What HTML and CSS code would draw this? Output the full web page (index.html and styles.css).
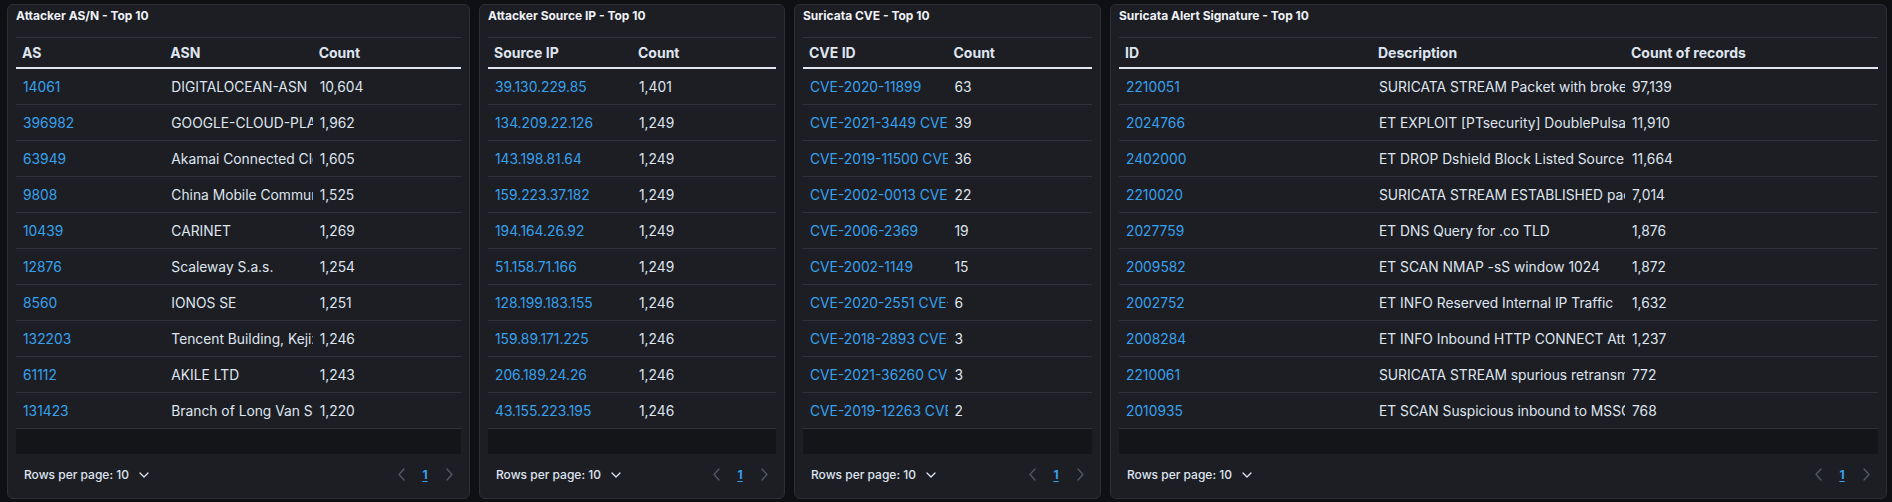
FILE: index.html
```html
<!DOCTYPE html>
<html lang="en">
<head>
<meta charset="utf-8">
<title>Dashboard - Top 10 tables</title>
<link rel="stylesheet" href="styles.css">
</head>
<body>
<main class="dashboard">

  <section class="panel panel-asn">
    <h2 class="panel-title">Attacker AS/N - Top 10</h2>
    <div class="table-wrap">
      <table class="data-table">
        <thead><tr><th>AS</th><th>ASN</th><th>Count</th></tr></thead>
        <tbody>
          <tr><td><a href="#">14061</a></td><td>DIGITALOCEAN-ASN</td><td>10,604</td></tr>
          <tr><td><a href="#">396982</a></td><td>GOOGLE-CLOUD-PLATFORM</td><td>1,962</td></tr>
          <tr><td><a href="#">63949</a></td><td>Akamai Connected Cloud</td><td>1,605</td></tr>
          <tr><td><a href="#">9808</a></td><td>China Mobile Communications Group Co., Ltd.</td><td>1,525</td></tr>
          <tr><td><a href="#">10439</a></td><td>CARINET</td><td>1,269</td></tr>
          <tr><td><a href="#">12876</a></td><td>Scaleway S.a.s.</td><td>1,254</td></tr>
          <tr><td><a href="#">8560</a></td><td>IONOS SE</td><td>1,251</td></tr>
          <tr><td><a href="#">132203</a></td><td>Tencent Building, Kejizhongyi Avenue</td><td>1,246</td></tr>
          <tr><td><a href="#">61112</a></td><td>AKILE LTD</td><td>1,243</td></tr>
          <tr><td><a href="#">131423</a></td><td>Branch of Long Van System Solution JSC</td><td>1,220</td></tr>
        </tbody>
      </table>
      <div class="table-empty"></div>
    </div>
    <div class="table-footer">
      <button class="rows-per-page" type="button">Rows per page: 10
        <svg class="chev-down" viewBox="0 0 10 6" width="10" height="6"><polyline points="1,1 5,5 9,1"/></svg>
      </button>
      <nav class="pager">
        <span class="pager-arrow"><svg viewBox="0 0 7 13" width="7" height="13"><polyline points="6,1 1,6.5 6,12"/></svg></span>
        <a class="pager-page" href="#">1</a>
        <span class="pager-arrow"><svg viewBox="0 0 7 13" width="7" height="13"><polyline points="1,1 6,6.5 1,12"/></svg></span>
      </nav>
    </div>
  </section>

  <section class="panel panel-ip">
    <h2 class="panel-title">Attacker Source IP - Top 10</h2>
    <div class="table-wrap">
      <table class="data-table">
        <thead><tr><th>Source IP</th><th>Count</th></tr></thead>
        <tbody>
          <tr><td><a href="#">39.130.229.85</a></td><td>1,401</td></tr>
          <tr><td><a href="#">134.209.22.126</a></td><td>1,249</td></tr>
          <tr><td><a href="#">143.198.81.64</a></td><td>1,249</td></tr>
          <tr><td><a href="#">159.223.37.182</a></td><td>1,249</td></tr>
          <tr><td><a href="#">194.164.26.92</a></td><td>1,249</td></tr>
          <tr><td><a href="#">51.158.71.166</a></td><td>1,249</td></tr>
          <tr><td><a href="#">128.199.183.155</a></td><td>1,246</td></tr>
          <tr><td><a href="#">159.89.171.225</a></td><td>1,246</td></tr>
          <tr><td><a href="#">206.189.24.26</a></td><td>1,246</td></tr>
          <tr><td><a href="#">43.155.223.195</a></td><td>1,246</td></tr>
        </tbody>
      </table>
      <div class="table-empty"></div>
    </div>
    <div class="table-footer">
      <button class="rows-per-page" type="button">Rows per page: 10
        <svg class="chev-down" viewBox="0 0 10 6" width="10" height="6"><polyline points="1,1 5,5 9,1"/></svg>
      </button>
      <nav class="pager">
        <span class="pager-arrow"><svg viewBox="0 0 7 13" width="7" height="13"><polyline points="6,1 1,6.5 6,12"/></svg></span>
        <a class="pager-page" href="#">1</a>
        <span class="pager-arrow"><svg viewBox="0 0 7 13" width="7" height="13"><polyline points="1,1 6,6.5 1,12"/></svg></span>
      </nav>
    </div>
  </section>

  <section class="panel panel-cve">
    <h2 class="panel-title">Suricata CVE - Top 10</h2>
    <div class="table-wrap">
      <table class="data-table">
        <thead><tr><th>CVE ID</th><th>Count</th></tr></thead>
        <tbody>
          <tr><td><a href="#">CVE-2020-11899</a></td><td>63</td></tr>
          <tr><td><a href="#">CVE-2021-3449 CVE-2021-3449</a></td><td>39</td></tr>
          <tr><td><a href="#">CVE-2019-11500 CVE-2019-11500</a></td><td>36</td></tr>
          <tr><td><a href="#">CVE-2002-0013 CVE-2002-0012</a></td><td>22</td></tr>
          <tr><td><a href="#">CVE-2006-2369</a></td><td>19</td></tr>
          <tr><td><a href="#">CVE-2002-1149</a></td><td>15</td></tr>
          <tr><td><a href="#">CVE-2020-2551 CVE-2020-2551</a></td><td>6</td></tr>
          <tr><td><a href="#">CVE-2018-2893 CVE-2018-2893</a></td><td>3</td></tr>
          <tr><td><a href="#">CVE-2021-36260 CVE-2021-36260</a></td><td>3</td></tr>
          <tr><td><a href="#">CVE-2019-12263 CVE-2019-12263</a></td><td>2</td></tr>
        </tbody>
      </table>
      <div class="table-empty"></div>
    </div>
    <div class="table-footer">
      <button class="rows-per-page" type="button">Rows per page: 10
        <svg class="chev-down" viewBox="0 0 10 6" width="10" height="6"><polyline points="1,1 5,5 9,1"/></svg>
      </button>
      <nav class="pager">
        <span class="pager-arrow"><svg viewBox="0 0 7 13" width="7" height="13"><polyline points="6,1 1,6.5 6,12"/></svg></span>
        <a class="pager-page" href="#">1</a>
        <span class="pager-arrow"><svg viewBox="0 0 7 13" width="7" height="13"><polyline points="1,1 6,6.5 1,12"/></svg></span>
      </nav>
    </div>
  </section>

  <section class="panel panel-sig">
    <h2 class="panel-title">Suricata Alert Signature - Top 10</h2>
    <div class="table-wrap">
      <table class="data-table">
        <thead><tr><th>ID</th><th>Description</th><th>Count of records</th></tr></thead>
        <tbody>
          <tr><td><a href="#">2210051</a></td><td>SURICATA STREAM Packet with broken ack</td><td>97,139</td></tr>
          <tr><td><a href="#">2024766</a></td><td>ET EXPLOIT [PTsecurity] DoublePulsar Backdoor installation communication</td><td>11,910</td></tr>
          <tr><td><a href="#">2402000</a></td><td>ET DROP Dshield Block Listed Source group 1</td><td>11,664</td></tr>
          <tr><td><a href="#">2210020</a></td><td>SURICATA STREAM ESTABLISHED packet out of window</td><td>7,014</td></tr>
          <tr><td><a href="#">2027759</a></td><td>ET DNS Query for .co TLD</td><td>1,876</td></tr>
          <tr><td><a href="#">2009582</a></td><td>ET SCAN NMAP -sS window 1024</td><td>1,872</td></tr>
          <tr><td><a href="#">2002752</a></td><td>ET INFO Reserved Internal IP Traffic</td><td>1,632</td></tr>
          <tr><td><a href="#">2008284</a></td><td>ET INFO Inbound HTTP CONNECT Attempt on Off-Port</td><td>1,237</td></tr>
          <tr><td><a href="#">2210061</a></td><td>SURICATA STREAM spurious retransmission</td><td>772</td></tr>
          <tr><td><a href="#">2010935</a></td><td>ET SCAN Suspicious inbound to MSSQL port 1433</td><td>768</td></tr>
        </tbody>
      </table>
      <div class="table-empty"></div>
    </div>
    <div class="table-footer">
      <button class="rows-per-page" type="button">Rows per page: 10
        <svg class="chev-down" viewBox="0 0 10 6" width="10" height="6"><polyline points="1,1 5,5 9,1"/></svg>
      </button>
      <nav class="pager">
        <span class="pager-arrow"><svg viewBox="0 0 7 13" width="7" height="13"><polyline points="6,1 1,6.5 6,12"/></svg></span>
        <a class="pager-page" href="#">1</a>
        <span class="pager-arrow"><svg viewBox="0 0 7 13" width="7" height="13"><polyline points="1,1 6,6.5 1,12"/></svg></span>
      </nav>
    </div>
  </section>

</main>
</body>
</html>
```

FILE: styles.css
```css
* { box-sizing: border-box; }

html, body {
  margin: 0;
  padding: 0;
  background: #0f1014;
  height: 100%;
}

body {
  font-family: Inter, "Noto Sans", "Liberation Sans", sans-serif;
  color: #dfe5ef;
  -webkit-font-smoothing: antialiased;
}

.dashboard {
  display: grid;
  grid-template-columns: 463px 306px 307px 777px;
  column-gap: 9px;
  padding: 4px 0 0 7px;
  align-items: start;
}

.panel {
  background: #1d1e24;
  border: 1px solid #2c2e35;
  border-radius: 6px;
  padding: 3px 8px 0;
  height: 495px;
  display: flex;
  flex-direction: column;
}

.panel-title {
  margin: 0 0 13px;
  font-size: 12px;
  line-height: 16px;
  font-weight: 700;
  color: #eef1f6;
  white-space: nowrap;
}

.data-table {
  width: 100%;
  table-layout: fixed;
  border-collapse: separate;
  border-spacing: 0;
  font-size: 13.8px;
}

.data-table th {
  height: 32px;
  padding: 0 0 0 6px;
  border-top: 1px solid #30323a;
  border-bottom: 2px solid #e3e8f0;
  text-align: left;
  font-weight: 700;
  font-size: 14px;
  color: #dfe5ef;
  white-space: nowrap;
  overflow: hidden;
  vertical-align: middle;
}

.data-table td {
  height: 36px;
  padding: 0 0 0 7px;
  border-bottom: 1px solid #30323a;
  white-space: nowrap;
  overflow: hidden;
  vertical-align: middle;
  color: #dfe5ef;
}

.data-table a {
  color: #36a2ef;
  text-decoration: none;
}

.table-empty {
  height: 25px;
  background: #141519;
}

.table-footer {
  height: 44px;
  padding-bottom: 3px;
  display: flex;
  align-items: center;
  justify-content: space-between;
}

.rows-per-page {
  display: flex;
  align-items: center;
  gap: 10px;
  background: none;
  border: 0;
  padding: 0 0 0 8px;
  font-family: inherit;
  font-size: 12px;
  font-weight: 500;
  color: #dfe5ef;
  cursor: pointer;
}

.chev-down polyline,
.pager-arrow polyline {
  fill: none;
  stroke-width: 1.3;
  stroke-linecap: round;
  stroke-linejoin: round;
}

.chev-down polyline { stroke: #dfe5ef; }

.pager {
  display: flex;
  align-items: center;
}

.pager-arrow,
.pager-page {
  width: 24px;
  height: 24px;
  display: flex;
  align-items: center;
  justify-content: center;
}

.pager-arrow polyline { stroke: #535966; }

.pager-page {
  color: #36a2ef;
  font-size: 12px;
  font-weight: 700;
  text-decoration: underline;
  text-underline-offset: 2px;
}
```
